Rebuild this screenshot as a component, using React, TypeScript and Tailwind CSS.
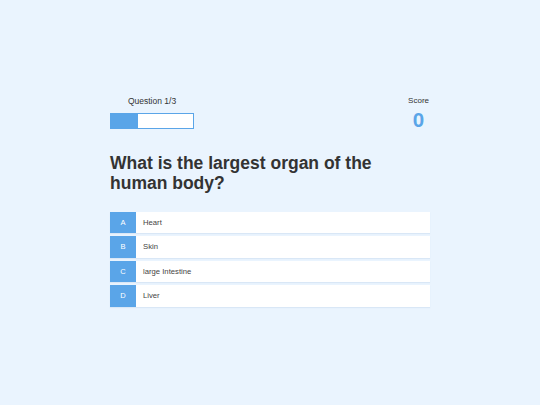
const options = [
  { key: "A", label: "Heart" },
  { key: "B", label: "Skin" },
  { key: "C", label: "large Intestine" },
  { key: "D", label: "Liver" },
];

export default function App() {
  const current = 1;
  const total = 3;

  return (
    <div className="min-h-[405px] w-full bg-[#eaf4fe] flex justify-center font-['Liberation_Sans',Arial,sans-serif]">
      <div className="w-[320px] pt-[95.5px]">
        {/* Header */}
        <div className="flex justify-between items-start">
          <div className="flex flex-col items-center w-[84px]">
            <p className="text-[8.5px] leading-[10px] text-[#333]">
              Question {current}/{total}
            </p>
            <div className="mt-[7.5px] w-[84px] h-[16px] border border-[#5aa5e8] bg-white">
              <div className="h-full w-1/3 bg-[#5aa5e8]" />
            </div>
          </div>
          <div className="flex flex-col items-center pr-[1px]">
            <p className="text-[8px] leading-[10px] text-[#333]">Score</p>
            <p className="mt-[2px] text-[20.5px] leading-[24px] font-bold text-[#5aa5e8]">
              0
            </p>
          </div>
        </div>

        {/* Question */}
        <h1 className="mt-[21.5px] text-[17.5px] leading-[20px] font-bold text-[#333]">
          What is the largest organ of the human body?
        </h1>

        {/* Options */}
        <div className="mt-[19px] flex flex-col gap-[3.3px]">
          {options.map((o) => (
            <div
              key={o.key}
              className="flex h-[21.2px] bg-white shadow-[0_1px_1px_rgba(120,160,200,0.15)]"
            >
              <div className="w-[26px] flex items-center justify-center bg-[#5aa5e8] text-white text-[7.5px]">
                {o.key}
              </div>
              <div className="flex items-center pl-[7px] text-[7.7px] text-[#444]">
                {o.label}
              </div>
            </div>
          ))}
        </div>
      </div>
    </div>
  );
}
